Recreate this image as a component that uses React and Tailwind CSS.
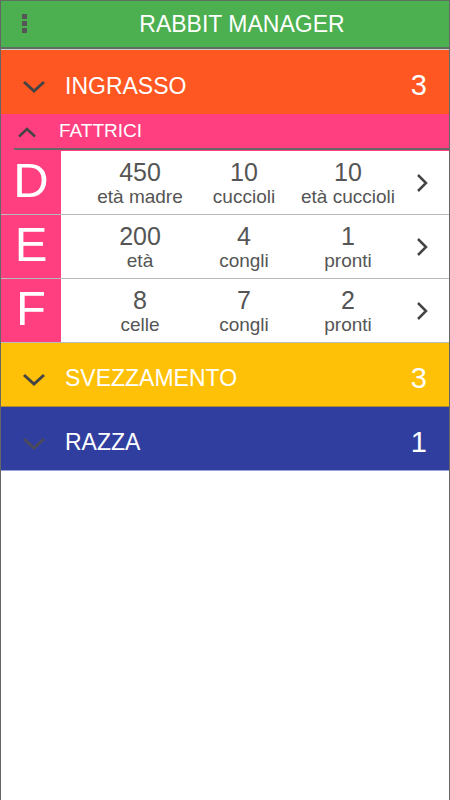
import React from 'react'

const rows = [
  { letter: 'D', stats: [['450', 'età madre'], ['10', 'cuccioli'], ['10', 'età cuccioli']] },
  { letter: 'E', stats: [['200', 'età'], ['4', 'congli'], ['1', 'pronti']] },
  { letter: 'F', stats: [['8', 'celle'], ['7', 'congli'], ['2', 'pronti']] },
]

function ChevronDown({ className = '' }) {
  return (
    <svg width="24" height="14" viewBox="0 0 24 14" className={className}>
      <path d="M2 2 L12 11 L22 2" fill="none" stroke="currentColor" strokeWidth="3" />
    </svg>
  )
}

function ChevronUp() {
  return (
    <svg width="20" height="11" viewBox="0 0 20 11" className="text-[#444]">
      <path d="M2 9.5 L10 2 L18 9.5" fill="none" stroke="currentColor" strokeWidth="2.5" />
    </svg>
  )
}

function ChevronRight() {
  return (
    <svg width="12" height="20" viewBox="0 0 12 20" className="text-[#444]">
      <path d="M2 2 L10 10 L2 18" fill="none" stroke="currentColor" strokeWidth="2.5" />
    </svg>
  )
}

function Section({ color, title, count, border, chevron = 'text-[#444]' }) {
  return (
    <div className={`flex h-[64px] items-center pt-[8px] ${color} ${border}`}>
      <div className="flex w-[64px] justify-center pl-[2px] pt-[2px]">
        <ChevronDown className={chevron} />
      </div>
      <div className="flex-1 text-[23px] text-white">{title}</div>
      <div className="pr-[22px] text-[29px] text-white">{count}</div>
    </div>
  )
}

export default function App() {
  return (
    <div className="min-h-[800px] border-x border-[#666] bg-white font-['Liberation_Sans',Arial,sans-serif]">
      <div className="relative flex h-[49px] items-center justify-center border-t border-b-2 border-[#5f6f5f] bg-[#4CAF50]">
        <div className="absolute left-[21px] top-[13px] flex flex-col gap-[2px]">
          <span className="block h-[5px] w-[5px] bg-[#555]" />
          <span className="block h-[5px] w-[5px] bg-[#555]" />
          <span className="block h-[5px] w-[5px] bg-[#555]" />
        </div>
        <div className="pl-[34px] text-[23px] text-white">RABBIT MANAGER</div>
      </div>
      <div className="h-px bg-[#ccc]" />

      <Section color="bg-[#FF5722]" title="INGRASSO" count="3" border="" />

      <div className="bg-[#FF3F80]">
        <div className="flex h-[34px] items-center">
          <div className="w-[58px] pl-[16px] pt-[2px]">
            <ChevronUp />
          </div>
          <div className="text-[19px] text-white">FATTRICI</div>
        </div>
        <div className="ml-[13px] h-[2px] bg-[#666]" />
        <div className="h-px" />
      </div>

      {rows.map((r) => (
        <div key={r.letter} className="flex h-[64px] border-b border-[#bbb]">
          <div className="flex w-[60px] items-center justify-center bg-[#FF3F80] pb-[4px] text-[49px] leading-none text-white">
            {r.letter}
          </div>
          <div className="flex flex-1 items-center pl-[27px]">
            {r.stats.map(([n, label], i) => (
              <div key={i} className="flex w-[104px] flex-col items-center text-[#555]">
                <div className="text-[25px] leading-[28px]">{n}</div>
                <div className="text-[19px] leading-[22px]">{label}</div>
              </div>
            ))}
            <div className="flex flex-1 justify-center pr-[5px]">
              <ChevronRight />
            </div>
          </div>
        </div>
      ))}

      <Section color="bg-[#FFC107]" title="SVEZZAMENTO" count="3" border="border-b border-[#a88a30]" />
      <Section color="bg-[#303F9F]" title="RAZZA" count="1" border="border-b border-[#9aa3d6]" chevron="text-[#4a4a5a]" />
    </div>
  )
}
